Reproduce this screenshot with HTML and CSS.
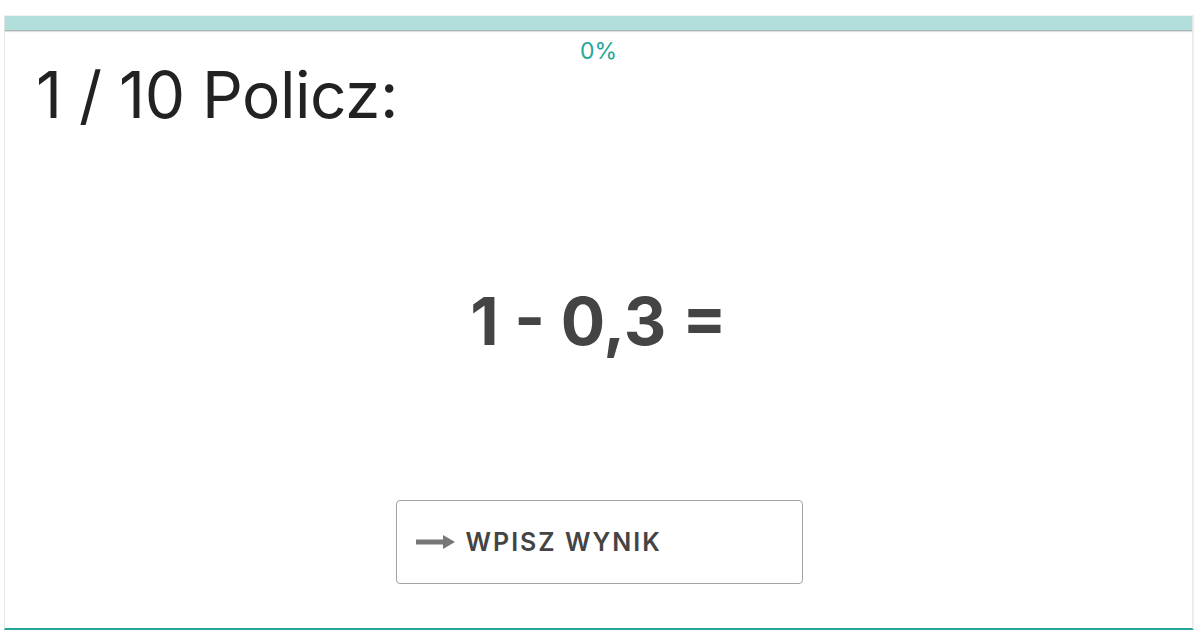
FILE: index.html
```html
<!DOCTYPE html>
<html lang="pl">
<head>
<meta charset="utf-8">
<link rel="stylesheet" href="styles.css">
</head>
<body>
<div class="card">
  <div class="progress"><div class="progress-fill"></div></div>
  <div class="percent">0%</div>
  <h1 class="title">1 / 10 Policz:</h1>
  <div class="equation">1 - 0,3 =</div>
  <div class="actions">
    <button class="btn">
      <svg class="arrow" width="40" height="18" viewBox="0 0 40 18"><path d="M0 6.5h27V2l12 7-12 7v-4.5H0z" fill="#777"/></svg>
      <span>WPISZ WYNIK</span>
    </button>
  </div>
</div>
</body>
</html>
```

FILE: styles.css
```css
html, body {
  margin: 0;
  padding: 0;
  background: #fff;
  width: 1200px;
  height: 630px;
  overflow: hidden;
}
body {
  padding: 15px 6px 0 4px;
  box-sizing: border-box;
  font-family: Inter, "Noto Sans", sans-serif;
}
.card {
  height: 615px;
  box-sizing: border-box;
  border-left: 1px solid #e6e6e6;
  border-right: 2px solid #ececec;
  border-top: 1px solid #f0f0f0;
  border-bottom: 2px solid #26a69a;
  display: flex;
  flex-direction: column;
}
.progress {
  height: 14px;
  background: #b2dfdb;
  border-bottom: 1px solid #a9b9b7;
  box-shadow: 0 1px 1px rgba(0,0,0,0.12);
}
.progress-fill {
  width: 0;
  height: 100%;
  background: #26a69a;
}
.percent {
  text-align: center;
  color: #26a69a;
  font-size: 23px;
  line-height: 28px;
  margin-top: 6px;
}
.title {
  margin: -6px 0 0 31px;
  font-weight: 400;
  font-size: 64px;
  line-height: 72px;
  color: #222;
  letter-spacing: -0.5px;
}
.equation {
  text-align: center;
  font-weight: 700;
  font-size: 66px;
  line-height: 80px;
  color: #444;
  margin-top: 150px;
}
.actions {
  display: flex;
  justify-content: center;
  margin-top: 139px;
  padding-left: 1px;
}
.btn {
  width: 407px;
  height: 84px;
  box-sizing: border-box;
  border: 1px solid #a3a3a3;
  border-radius: 4px;
  background: #fff;
  display: flex;
  align-items: center;
  gap: 10px;
  padding: 0 0 0 19px;
  font-family: Inter, "Noto Sans", sans-serif;
  font-size: 25px;
  font-weight: 600;
  letter-spacing: 2px;
  color: #444;
}
.arrow {
  display: block;
  flex: none;
}
```
